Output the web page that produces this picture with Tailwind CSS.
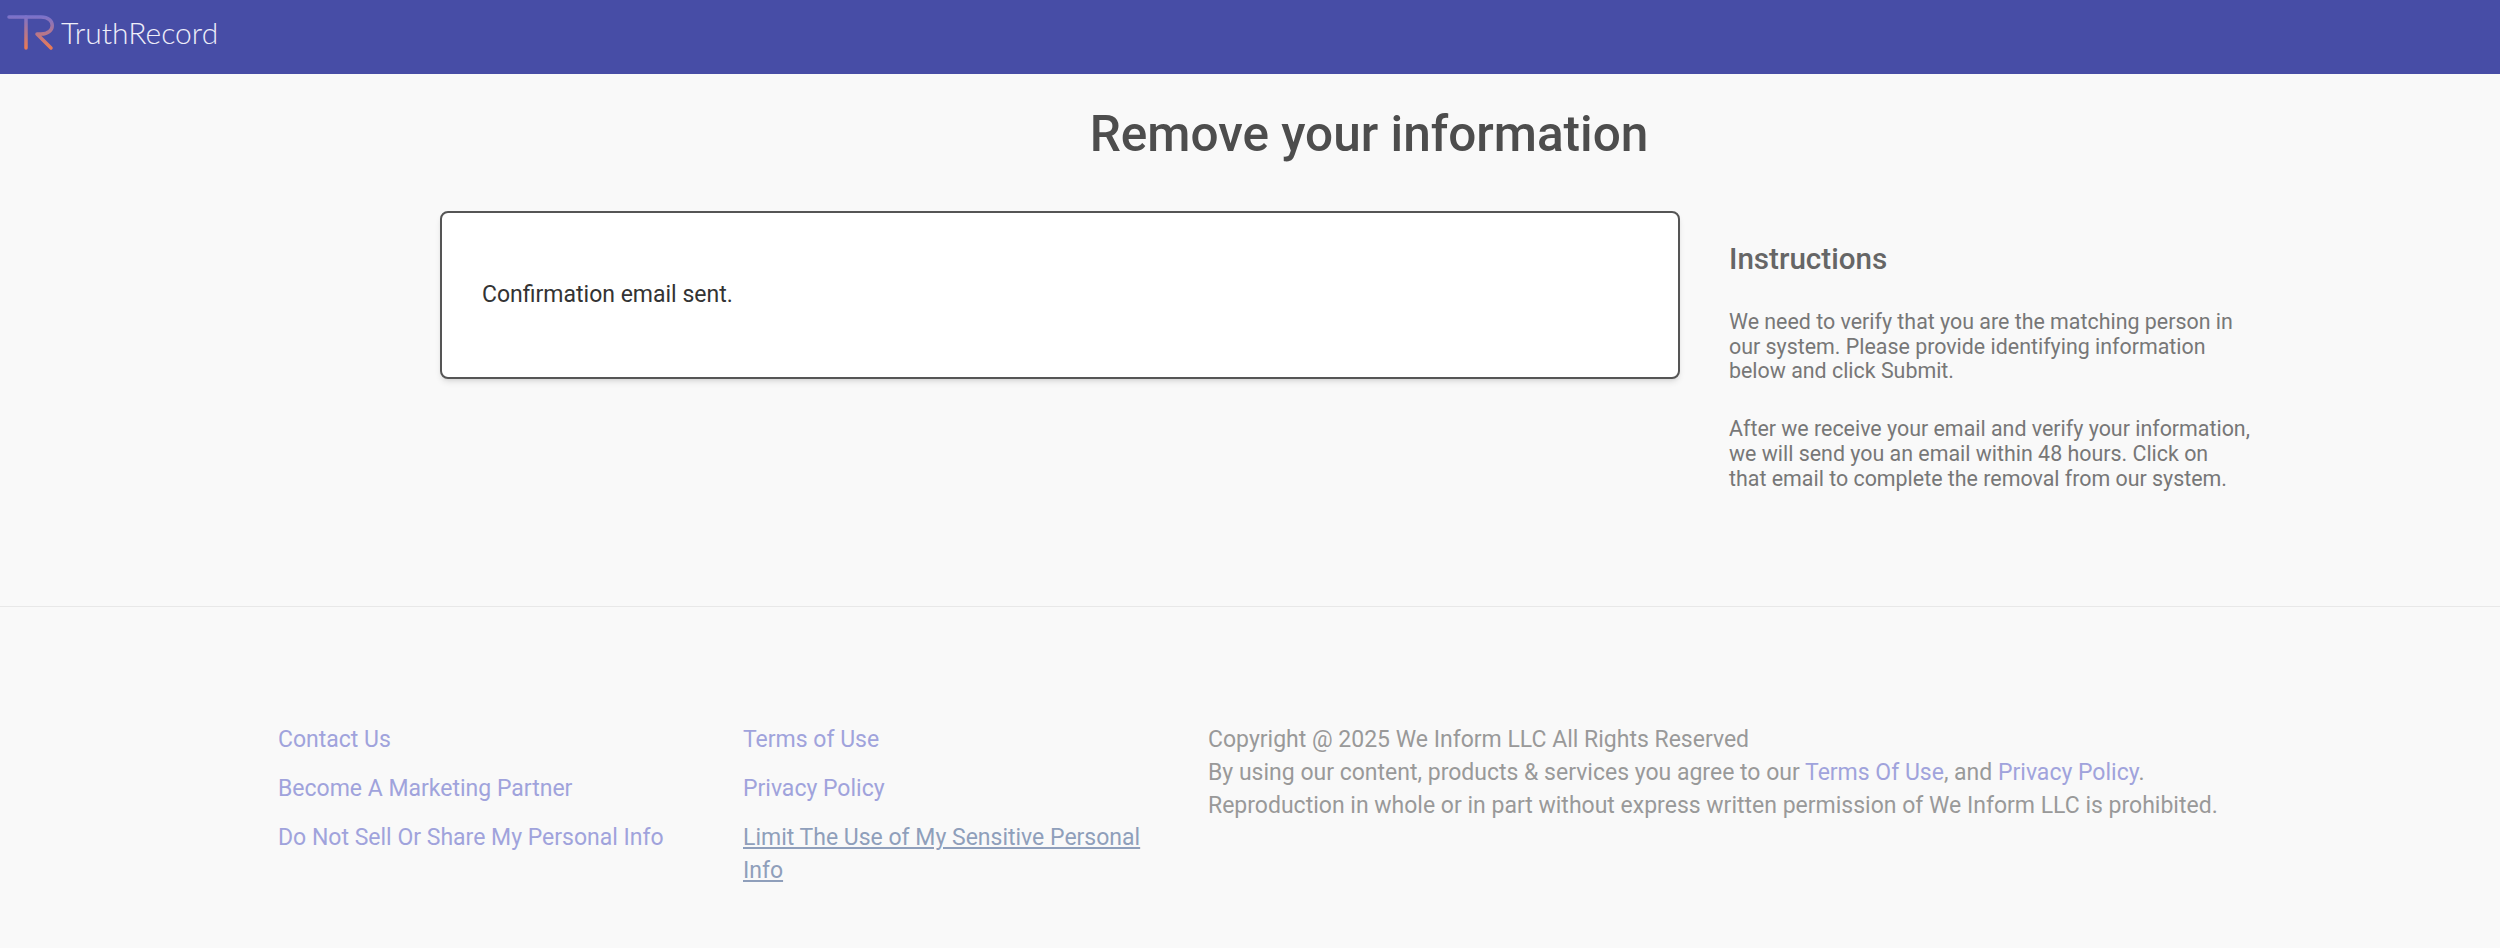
<!DOCTYPE html>
<html lang="en"><head><meta charset="utf-8"><title>Remove your information</title>
<script src="https://cdn.jsdelivr.net/npm/@tailwindcss/browser@4"></script></head>
<body class="bg-[#f9f9f9] font-[Roboto,sans-serif] h-[948px] overflow-hidden">
<header class="h-[74px] bg-[#474da6] flex items-center">
<svg width="60" height="74" viewBox="0 0 60 74" fill="none" stroke-width="3.5" stroke-linecap="round" stroke-linejoin="round" class="shrink-0">
<defs><linearGradient id="g" gradientUnits="userSpaceOnUse" x1="0" y1="16" x2="0" y2="50"><stop offset="0" stop-color="#7a72cc"/><stop offset="1" stop-color="#f07a4e"/></linearGradient></defs>
<path d="M9 17H41C56 17 56 34 41 34H37L51 48" stroke="url(#g)"/>
<path d="M26 17V48" stroke="url(#g)"/>
</svg>
<span class="ml-[3px] -translate-x-[2px] mb-[11px] text-[30px] font-[Lato,sans-serif] font-light text-[#eeeef9] leading-none">TruthRecord</span>
</header>
<main class="h-[533px] border-b border-[#e8e8e8]">
<h1 class="text-[49.5px] leading-[56px] font-medium text-[#4d4d4d] text-center pt-[32px] box-content pl-[238px]">Remove your information</h1>
<div class="flex mt-[49px] ml-[440px]">
<div class="w-[1240px] h-[168px] bg-white border-2 border-[#555] rounded-[8px] shadow-md flex items-center pl-[40px] text-[23px] text-[#333]">Confirmation email sent.</div>
<aside class="ml-[49px] w-[525px] text-[#777] text-[21.4px] leading-[24.7px]">
<h2 class="text-[29.6px] font-medium text-[#666] leading-[34px] mt-[31px] mb-[34px]">Instructions</h2>
<p class="mb-[33px]">We need to verify that you are the matching person in our system. Please provide identifying information below and click Submit.</p>
<p>After we receive your email and verify your information, we will send you an email within 48 hours. Click on<br>that email to complete the removal from our system.</p>
</aside>
</div>
</main>
<footer class="flex pl-[278px] pt-[116px] text-[23px] leading-[33px] text-[#a0a3dc]">
<ul class="w-[465px] flex flex-col gap-[16px]"><li>Contact Us</li><li>Become A Marketing Partner</li><li>Do Not Sell Or Share My Personal Info</li></ul>
<ul class="w-[465px] flex flex-col gap-[16px]"><li>Terms of Use</li><li>Privacy Policy</li><li class="w-[420px] text-[#8f9fbb] underline">Limit The Use of My Sensitive Personal Info</li></ul>
<div class="text-[#999]"><p>Copyright @ 2025 We Inform LLC All Rights Reserved</p><p>By using our content, products &amp; services you agree to our <a class="text-[#a0a3dc]">Terms Of Use</a>, and <a class="text-[#a0a3dc]">Privacy Policy</a>.</p><p>Reproduction in whole or in part without express written permission of We Inform LLC is prohibited.</p></div>
</footer>
</body></html>
